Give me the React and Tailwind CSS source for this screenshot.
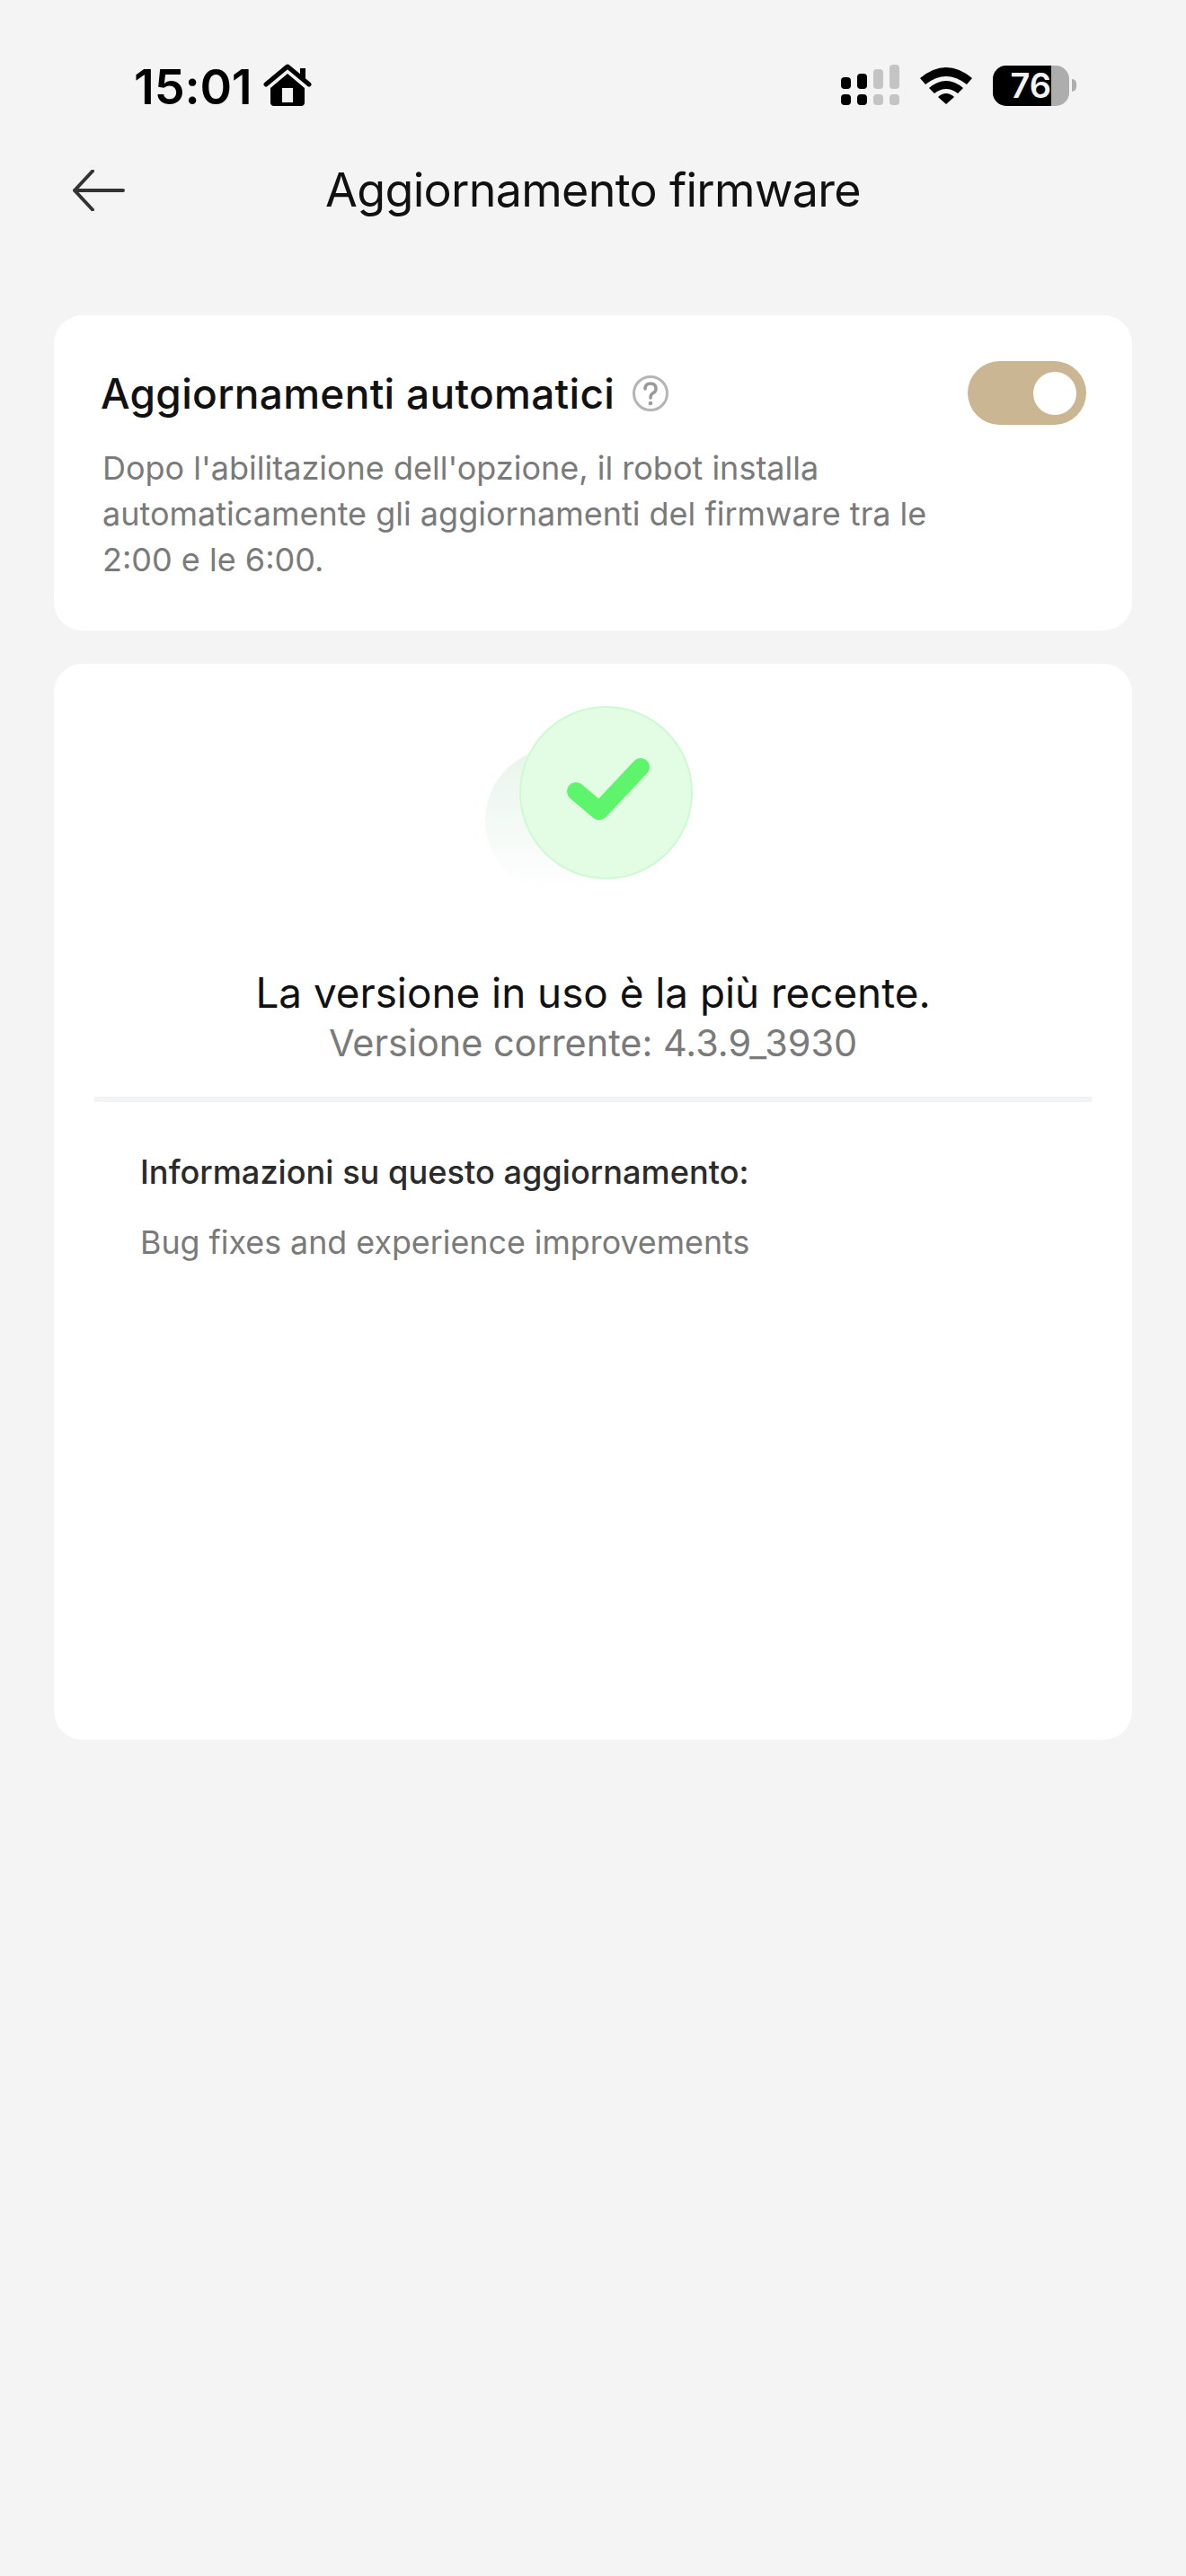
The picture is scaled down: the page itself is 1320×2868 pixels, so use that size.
export default function App() {
  return (
    <div className="w-[1320px] h-[2868px] bg-[#f4f4f4] overflow-hidden font-['Inter','Liberation_Sans',sans-serif]">
      {/* status bar */}
      <div className="h-[130px] pl-[149px] pr-[122px] pt-[62px] flex items-start justify-between">
        <div className="flex items-center gap-[13px] h-[70px]">
          <span className="text-[54px] leading-[70px] font-semibold text-black tracking-[-0.2px]">15:01</span>
          <svg width="54" height="48" viewBox="0 0 54 48" className="mt-[-4px]">
            <path d="M3 23 L27 3 L51 23" fill="none" stroke="#000" strokeWidth="5" strokeLinecap="round" strokeLinejoin="round" />
            <rect x="41" y="5" width="6" height="12" fill="#000" />
            <path fillRule="evenodd" d="M27 11 L46 27 V43 Q46 47 42 47 H12 Q8 47 8 43 V27 Z M21 27 V43 H33 V27 Z" fill="#000" />
          </svg>
        </div>
        <div className="flex items-center h-[70px] mt-[-2px]">
          <svg width="66" height="46" viewBox="0 0 66 46" className="mr-[22px]">
            <rect x="0" y="14" width="11" height="13" rx="4" fill="#000" />
            <rect x="18" y="10" width="11" height="17" rx="4" fill="#000" />
            <rect x="36" y="5" width="11" height="22" rx="4" fill="#c4c4c4" />
            <rect x="54" y="0" width="11" height="27" rx="4" fill="#c4c4c4" />
            <rect x="0" y="33" width="11" height="12" rx="4" fill="#000" />
            <rect x="18" y="33" width="11" height="12" rx="4" fill="#000" />
            <rect x="36" y="33" width="11" height="12" rx="4" fill="#c4c4c4" />
            <rect x="54" y="33" width="11" height="12" rx="4" fill="#c4c4c4" />
          </svg>
          <svg width="58" height="42" viewBox="0 0 58 42" className="mr-[23px]">
            <path d="M0 13 Q29 -11 58 13 L52 20 Q29 2 6 20 Z" fill="#000" />
            <path d="M10 24 Q29 8 48 24 L42 30 Q29 20 16 30 Z" fill="#000" />
            <path d="M20 34 Q29 26 38 34 L29 42 Z" fill="#000" />
          </svg>
          <div className="relative w-[85px] h-[45px] rounded-[15px] overflow-hidden bg-[#adadad] flex">
            <div className="w-[65px] h-full bg-black flex items-center justify-end">
              <span className="text-[38px] leading-none font-semibold text-[#f4f4f4]">76</span>
            </div>
          </div>
          <div className="w-[5px] h-[14px] ml-[3px] rounded-r-full bg-[#adadad]" />
        </div>
      </div>

      {/* header */}
      <div className="relative h-[164px] flex items-center justify-center">
        <svg width="58" height="46" viewBox="0 0 58 46" className="absolute left-[81px] top-[59px]">
          <path d="M22 1.5 L2 23 L22 44.5 M2 23 H56" fill="none" stroke="#333" strokeWidth="4" strokeLinecap="round" strokeLinejoin="round" />
        </svg>
        <h1 className="text-[52px] leading-[64px] font-normal text-[#111] tracking-[-0.7px]">Aggiornamento firmware</h1>
      </div>

      {/* auto-update card */}
      <div className="mx-[60px] h-[351px] mt-[57px] bg-white rounded-[32px] pl-[52px] pr-[51px] pt-[51px]">
        <div className="flex items-center justify-between h-[71px]">
          <div className="flex items-center gap-[19px]">
            <span className="text-[46px] leading-[60px] font-medium text-[#111] tracking-[0.3px]">Aggiornamenti automatici</span>
            <svg width="42" height="42" viewBox="0 0 42 42">
              <circle cx="21" cy="21" r="18.5" fill="none" stroke="#b5b5b5" strokeWidth="3" />
              <path d="M15 16 Q15 10 21 10 Q27 10 27 16 Q27 19 24 20.5 Q21 22 21 26" fill="none" stroke="#9a9a9a" strokeWidth="3.5" strokeLinecap="round" />
              <circle cx="21" cy="32" r="2.3" fill="#9a9a9a" />
            </svg>
          </div>
          <div className="w-[132px] h-[71px] rounded-full bg-[#cbb693] flex items-center justify-end pr-[11px]">
            <div className="w-[48px] h-[48px] rounded-full bg-white" />
          </div>
        </div>
        <p className="mt-[23px] w-[960px] text-[36px] leading-[51px] text-[#7a7a7a] font-normal pl-[2px]">
          Dopo l'abilitazione dell'opzione, il robot installa automaticamente gli aggiornamenti del firmware tra le 2:00 e le 6:00.
        </p>
      </div>

      {/* version card */}
      <div className="mx-[60px] h-[1198px] mt-[37px] bg-white rounded-[32px] flex flex-col items-center">
        <div className="relative w-[232px] h-[207px] mt-[47px] mr-[8px]">
          <div className="absolute left-0 top-[47px] w-[160px] h-[160px] rounded-full bg-gradient-to-b from-[#e8f4eb] to-white" />
          <div className="absolute left-[38px] top-0 w-[193px] h-[193px] rounded-full bg-[#e3fde4] border-[2px] border-[#cdfad0] flex items-center justify-center">
            <svg width="96" height="80" viewBox="0 0 96 80">
              <path d="M14 38 L40 60 L86 11" fill="none" stroke="#5ef46b" strokeWidth="20" strokeLinecap="round" strokeLinejoin="round" />
            </svg>
          </div>
        </div>
        <p className="mt-[84px] text-[45.8px] leading-[58px] text-[#111]">La versione in uso è la più recente.</p>
        <p className="mt-[-1px] text-[41.4px] leading-[54px] text-[#7a7a7a]">Versione corrente: 4.3.9_3930</p>
        <div className="w-[1110px] h-[6px] mt-[33px] bg-[#f2f3f4]" />
        <div className="w-full pl-[96px] mt-[54px]">
          <p className="text-[36.2px] leading-[48px] font-medium text-[#2b2b2b]">Informazioni su questo aggiornamento:</p>
          <p className="mt-[30px] text-[35.8px] leading-[48px] text-[#7a7a7a]">Bug fixes and experience improvements</p>
        </div>
      </div>
    </div>
  );
}
